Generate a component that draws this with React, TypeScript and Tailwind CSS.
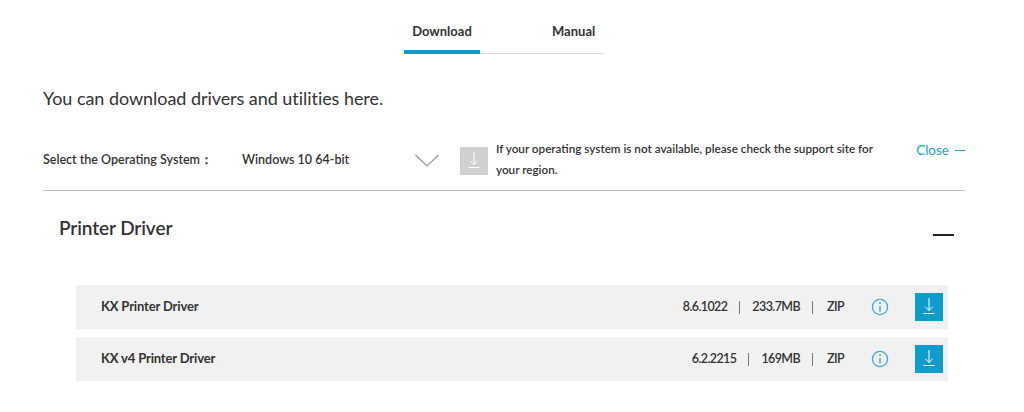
const F = "font-['Lato',sans-serif]";

function DownloadGlyph({ className }: { className: string }) {
  return (
    <svg viewBox="0 0 28 28" className={className} fill="none" stroke="currentColor" strokeWidth="1">
      <path d="M14 5v12.500M10.300 13.800 14 17.500l3.700-3.700M8.500 20.500h11" />
    </svg>
  );
}

function Info() {
  return (
    <svg viewBox="0 0 18 18" className="w-[18px] h-[18px] text-[#3ba9d3]" fill="none" stroke="currentColor">
      <circle cx="9" cy="9" r="7.600" strokeWidth="1.300" />
      <path d="M9 8v5.500" strokeWidth="1.500" />
      <circle cx="9" cy="5.300" r="1" fill="currentColor" stroke="none" />
    </svg>
  );
}

function Row({ name, version, size }: { name: string; version: string; size: string }) {
  return (
    <div className="h-11 bg-[#f1f1f1] flex items-center pl-[25px] pr-[5px] text-[#333]">
      <span className="text-[13px] font-bold flex-1 tracking-[-0.15px]">{name}</span>
      <span className="text-[12.5px] font-semibold tracking-[-0.6px]">{version}</span>
      <span className="w-px h-[13px] bg-[#777] mx-[12px]" />
      <span className="text-[12.5px] font-semibold tracking-[-0.6px]">{size}</span>
      <span className="w-px h-[13px] bg-[#777] ml-[12px] mr-[14px]" />
      <span className="text-[12.5px] font-semibold tracking-[-0.6px]">ZIP</span>
      <span className="ml-[27px] mr-[26px] flex"><Info /></span>
      <span className="w-7 h-7 bg-[#0f9ccb] text-white flex items-center justify-center">
        <DownloadGlyph className="w-7 h-7" />
      </span>
    </div>
  );
}

export default function App() {
  return (
    <div className={`${F} w-[1024px] h-[412px] overflow-hidden bg-white text-[#333] pl-[43px] pr-[59px]`}>
      <div className="w-[200px] mx-auto h-[54px] pt-[22px] flex border-b border-[#ddd] text-[13px] font-bold">
        <div className="w-[76px] h-[32px] border-b-[4px] border-[#0f9ccb] text-center">Download</div>
        <div className="flex-1 pl-[72px]">Manual</div>
      </div>
      <h1 className="mt-[33px] text-[18px] leading-[22px] font-normal tracking-[-0.05px]">You can download drivers and utilities here.</h1>
      <div className="mt-[21px] h-[61px] border-b border-[#bbb] flex items-start">
        <div className="w-[199px] pt-[20px] text-[12.5px] font-semibold leading-[20px]">Select the Operating System：</div>
        <div className="w-[172px] pt-[20px] text-[12.5px] font-semibold leading-[20px]">Windows 10 64-bit</div>
        <svg viewBox="0 0 24 13" className="w-6 h-[13px] mt-[24px] ml-px mr-px text-[#999]" fill="none" stroke="currentColor" strokeWidth="1.200">
          <path d="M.5 1 12 12 23.500 1" />
        </svg>
        <span className="ml-[20px] mt-[17px] w-7 h-7 bg-[#d0d0d0] text-white flex items-center justify-center">
          <DownloadGlyph className="w-7 h-7" />
        </span>
        <p className="ml-[8px] mt-[8px] w-[392px] text-[11.7px] font-semibold leading-[21px]">
          If your operating system is not available, please check the support site for your region.
        </p>
        <div className="ml-auto pt-[10px] text-[13.5px] leading-[20px] text-[#1a9fcf] flex items-center gap-[6px]">
          Close <span className="w-[10px] h-px bg-[#1a9fcf]" />
        </div>
      </div>
      <div className="h-[94px] pl-[16px] pr-[11px] flex items-start justify-between">
        <h2 className="mt-[25px] text-[19px] leading-[24px] font-semibold tracking-[-0.1px]">Printer Driver</h2>
        <span className="mt-[43px] w-[21px] h-[2px] bg-[#222]" />
      </div>
      <div className="ml-[33px] mr-[17px] flex flex-col gap-2">
        <Row name="KX Printer Driver" version="8.6.1022" size="233.7MB" />
        <Row name="KX v4 Printer Driver" version="6.2.2215" size="169MB" />
      </div>
    </div>
  );
}
